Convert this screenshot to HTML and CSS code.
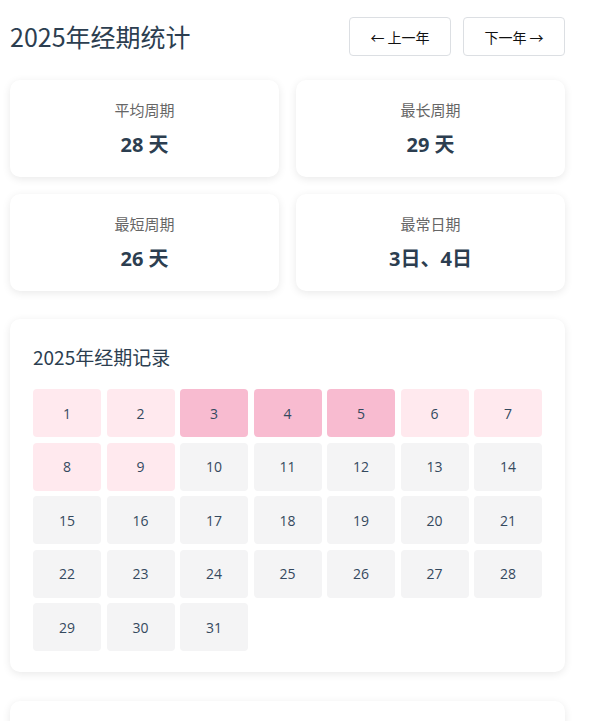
FILE: index.html
```html
<!DOCTYPE html>
<html lang="zh-CN">
<head>
<meta charset="utf-8">
<title>2025年经期统计</title>
<link rel="stylesheet" href="styles.css">
</head>
<body>
<div class="app">
  <header class="header">
    <h1 class="title">2025年经期统计</h1>
    <div class="nav">
      <button class="btn">← 上一年</button>
      <button class="btn">下一年 →</button>
    </div>
  </header>

  <section class="stats">
    <div class="stat-card"><div class="stat-label">平均周期</div><div class="stat-value">28 天</div></div>
    <div class="stat-card"><div class="stat-label">最长周期</div><div class="stat-value">29 天</div></div>
    <div class="stat-card"><div class="stat-label">最短周期</div><div class="stat-value">26 天</div></div>
    <div class="stat-card"><div class="stat-label">最常日期</div><div class="stat-value">3日、4日</div></div>
  </section>

  <section class="card">
    <h2 class="card-title">2025年经期记录</h2>
    <div class="days">
      <div class="day light">1</div>
      <div class="day light">2</div>
      <div class="day strong">3</div>
      <div class="day strong">4</div>
      <div class="day strong">5</div>
      <div class="day light">6</div>
      <div class="day light">7</div>
      <div class="day light">8</div>
      <div class="day light">9</div>
      <div class="day">10</div>
      <div class="day">11</div>
      <div class="day">12</div>
      <div class="day">13</div>
      <div class="day">14</div>
      <div class="day">15</div>
      <div class="day">16</div>
      <div class="day">17</div>
      <div class="day">18</div>
      <div class="day">19</div>
      <div class="day">20</div>
      <div class="day">21</div>
      <div class="day">22</div>
      <div class="day">23</div>
      <div class="day">24</div>
      <div class="day">25</div>
      <div class="day">26</div>
      <div class="day">27</div>
      <div class="day">28</div>
      <div class="day">29</div>
      <div class="day">30</div>
      <div class="day">31</div>
    </div>
  </section>

  <section class="card next-card"></section>
</div>
</body>
</html>
```

FILE: styles.css
```css
* { box-sizing: border-box; }

html, body {
  margin: 0;
  padding: 0;
  background: #ffffff;
}

body {
  font-family: "Noto Sans CJK SC", "Open Sans", sans-serif;
  color: #2c3e50;
}

.app {
  width: 575px;
  padding: 17px 10px 0 10px;
}

.header {
  display: flex;
  align-items: center;
  justify-content: space-between;
  height: 39px;
  margin-bottom: 24px;
}

.title {
  margin: 0;
  font-size: 25px;
  font-weight: 400;
  color: #2c3e50;
  line-height: 1;
}

.nav {
  display: flex;
  gap: 12px;
}

.btn {
  width: 102px;
  height: 39px;
  background: #fff;
  border: 1px solid #dcdfe3;
  border-radius: 4px;
  font-family: "Noto Sans CJK SC", sans-serif;
  font-size: 14px;
  color: #111;
  padding: 0;
}

.stats {
  display: grid;
  grid-template-columns: 1fr 1fr;
  column-gap: 17px;
  row-gap: 17px;
  margin-bottom: 28px;
}

.stat-card {
  height: 97px;
  background: #fff;
  border-radius: 10px;
  box-shadow: 0 2px 8px rgba(0, 0, 0, 0.09);
  display: flex;
  flex-direction: column;
  align-items: center;
  justify-content: center;
  gap: 12px;
}

.stat-label {
  font-size: 15px;
  color: #666;
  line-height: 20px;
}

.stat-value {
  font-family: "Open Sans", "Noto Sans CJK SC", sans-serif;
  font-size: 20px;
  font-weight: 700;
  color: #2c3e50;
  line-height: 26px;
}

.card {
  background: #fff;
  border-radius: 10px;
  box-shadow: 0 2px 8px rgba(0, 0, 0, 0.09);
  padding: 23px 23px 21px 23px;
  margin-bottom: 29px;
}

.card-title {
  margin: 0 0 17px 0;
  font-size: 19px;
  font-weight: 400;
  line-height: 30px;
  color: #2c3e50;
}

.days {
  display: grid;
  grid-template-columns: repeat(7, 1fr);
  gap: 5.5px;
}

.day {
  height: 48px;
  border-radius: 4px;
  background: #f4f4f5;
  display: flex;
  align-items: center;
  justify-content: center;
  font-family: "Open Sans", "Noto Sans CJK SC", sans-serif;
  font-size: 14px;
  color: #34495e;
}

.day.light { background: #ffe9ee; }
.day.strong { background: #f8bbd0; }

.next-card {
  height: 60px;
  margin-bottom: 0;
}
```
